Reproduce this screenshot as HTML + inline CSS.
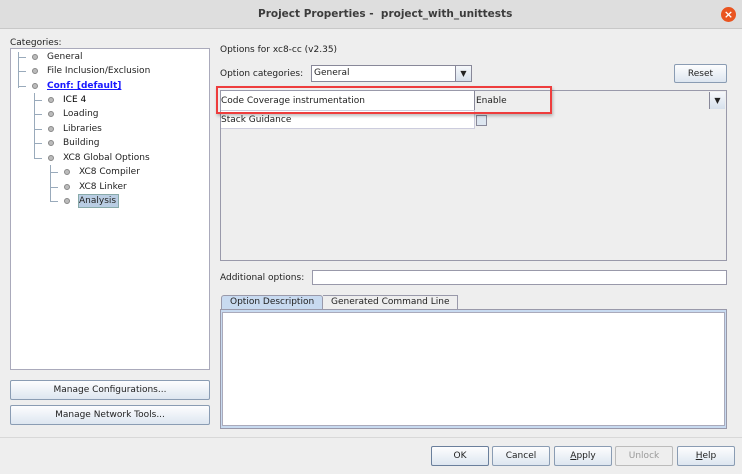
<!DOCTYPE html>
<html><head><style>
*{box-sizing:border-box;margin:0;padding:0}
body{width:742px;height:474px;overflow:hidden;background:#eeeeee;font-family:"DejaVu Sans","Liberation Sans",sans-serif;font-size:9px;color:#222;position:relative}
.a{position:absolute;white-space:nowrap}
.btn{position:absolute;border:1px solid #8a9cb3;border-radius:2px;background:linear-gradient(#fdfdfe,#dde6f0);text-align:center;font-size:9px;line-height:18px;color:#222}
.t{position:absolute;white-space:nowrap;font-size:9px}
.dot{position:absolute;width:6px;height:6px;border-radius:50%;background:#bbb;border:1px solid #888}
.hl{position:absolute;background:#b9cde3}
.vl{position:absolute;width:1px;background:#9ab}
.hl2{position:absolute;height:1px;background:#9ab}
</style></head><body>
<div class="a" style="left:0;top:0;width:742px;height:29px;background:#dedede;border-bottom:1px solid #c8c8c8"></div>
<div class="a" style="left:258px;top:8px;font-size:10.5px;font-weight:bold;color:#3c3c3c">Project Properties -&nbsp; project_with_unittests</div>
<div class="a" style="left:721px;top:7px;width:15px;height:15px;border-radius:50%;background:#e95420;color:#fff;font-size:11px;line-height:15px;text-align:center;font-weight:bold">×</div>

<div class="t" style="left:10px;top:38px">Categories:</div>
<div class="a" style="left:10px;top:48px;width:200px;height:322px;background:#fff;border:1px solid #aab"></div>
<div class="vl" style="left:18px;top:52px;height:36px"></div>
<div class="hl2" style="left:18px;top:57px;width:8px"></div>
<div class="hl2" style="left:18px;top:71px;width:8px"></div>
<div class="hl2" style="left:18px;top:86px;width:8px"></div>
<div class="vl" style="left:34px;top:93px;height:66px"></div>
<div class="hl2" style="left:34px;top:100px;width:8px"></div>
<div class="hl2" style="left:34px;top:114px;width:8px"></div>
<div class="hl2" style="left:34px;top:129px;width:8px"></div>
<div class="hl2" style="left:34px;top:143px;width:8px"></div>
<div class="hl2" style="left:34px;top:158px;width:8px"></div>
<div class="vl" style="left:50px;top:165px;height:37px"></div>
<div class="hl2" style="left:50px;top:172px;width:8px"></div>
<div class="hl2" style="left:50px;top:187px;width:8px"></div>
<div class="hl2" style="left:50px;top:201px;width:8px"></div>
<div class="dot" style="left:32px;top:54px"></div><div class="t" style="left:47px;top:52px">General</div>
<div class="dot" style="left:32px;top:68px"></div><div class="t" style="left:47px;top:66px">File Inclusion/Exclusion</div>
<div class="dot" style="left:32px;top:83px"></div><div class="t" style="left:47px;top:81px;color:#1a1aff;font-weight:bold;text-decoration:underline">Conf: [default]</div>
<div class="dot" style="left:48px;top:97px"></div><div class="t" style="left:63px;top:95px;color:#000">ICE 4</div>
<div class="dot" style="left:48px;top:111px"></div><div class="t" style="left:63px;top:109px">Loading</div>
<div class="dot" style="left:48px;top:126px"></div><div class="t" style="left:63px;top:124px">Libraries</div>
<div class="dot" style="left:48px;top:140px"></div><div class="t" style="left:63px;top:138px">Building</div>
<div class="dot" style="left:48px;top:155px"></div><div class="t" style="left:63px;top:153px">XC8 Global Options</div>
<div class="dot" style="left:64px;top:169px"></div><div class="t" style="left:79px;top:167px">XC8 Compiler</div>
<div class="dot" style="left:64px;top:184px"></div><div class="t" style="left:79px;top:182px">XC8 Linker</div>
<div class="dot" style="left:64px;top:198px"></div>
<div class="hl" style="left:78px;top:194px;width:41px;height:14px;border:1px solid #8aa"></div>
<div class="t" style="left:79px;top:196px">Analysis</div>

<div class="btn" style="left:10px;top:380px;width:200px;height:20px">Manage Configurations...</div>
<div class="btn" style="left:10px;top:405px;width:200px;height:20px">Manage Network Tools...</div>

<div class="t" style="left:220px;top:45px">Options for xc8-cc (v2.35)</div>
<div class="t" style="left:220px;top:69px">Option categories:</div>
<div class="a" style="left:311px;top:65px;width:161px;height:17px;background:#fff;border:1px solid #889"></div>
<div class="t" style="left:314px;top:68px">General</div>
<div class="a" style="left:455px;top:66px;width:16px;height:15px;background:linear-gradient(#f6f8fb,#d6e0ec);border-left:1px solid #889;font-size:8px;text-align:center;line-height:15px">▼</div>
<div class="btn" style="left:674px;top:64px;width:53px;height:19px">Reset</div>

<div class="a" style="left:220px;top:90px;width:507px;height:171px;background:#eee;border:1px solid #99a"></div>
<div class="a" style="left:221px;top:91px;width:253px;height:19px;background:#fff"></div>
<div class="a" style="left:474px;top:91px;width:252px;height:19px;background:#eee;border-left:1px solid #889"></div>
<div class="a" style="left:709px;top:92px;width:16px;height:17px;background:linear-gradient(#f6f8fb,#d6e0ec);border-left:1px solid #889;font-size:8px;text-align:center;line-height:17px">▼</div>
<div class="t" style="left:221px;top:96px">Code Coverage instrumentation</div>
<div class="t" style="left:476px;top:96px">Enable</div>
<div class="a" style="left:221px;top:110px;width:505px;height:19px;background:#fff;border-top:1px solid #ccd;border-bottom:1px solid #ccd"></div>
<div class="a" style="left:474px;top:110px;width:252px;height:19px;background:#eee;border-left:1px solid #ccd"></div>
<div class="t" style="left:221px;top:115px">Stack Guidance</div>
<div class="a" style="left:476px;top:115px;width:11px;height:11px;border:1px solid #889;background:#dde6f0"></div>
<div class="a" style="left:216px;top:86px;width:336px;height:28px;border:2px solid #ee3d3d;box-shadow:1px 2px 3px rgba(0,0,0,.25)"></div>

<div class="t" style="left:220px;top:273px">Additional options:</div>
<div class="a" style="left:312px;top:270px;width:415px;height:15px;background:#fff;border:1px solid #99a"></div>

<div class="a" style="left:221px;top:295px;width:102px;height:15px;background:#c8daf0;border:1px solid #99a;border-bottom:none;border-radius:3px 3px 0 0"></div>
<div class="t" style="left:230px;top:297px">Option Description</div>
<div class="a" style="left:323px;top:295px;width:135px;height:14px;background:#eee;border:1px solid #99a;border-bottom:none;border-left:none"></div>
<div class="t" style="left:331px;top:297px">Generated Command Line</div>
<div class="a" style="left:220px;top:309px;width:507px;height:120px;background:#c8daf0;border:1px solid #99a"></div>
<div class="a" style="left:222px;top:312px;width:503px;height:114px;background:#fff;border:1px solid #aab"></div>

<div class="a" style="left:0;top:437px;width:742px;height:1px;background:#d8d8d8"></div>
<div class="btn" style="left:431px;top:446px;width:58px;height:20px;border-color:#6a7f9c">OK</div>
<div class="btn" style="left:492px;top:446px;width:58px;height:20px">Cancel</div>
<div class="btn" style="left:554px;top:446px;width:58px;height:20px"><u>A</u>pply</div>
<div class="btn" style="left:615px;top:446px;width:58px;height:20px;background:#eee;border-color:#bbb;color:#999">Unlock</div>
<div class="btn" style="left:677px;top:446px;width:58px;height:20px"><u>H</u>elp</div>
</body></html>
